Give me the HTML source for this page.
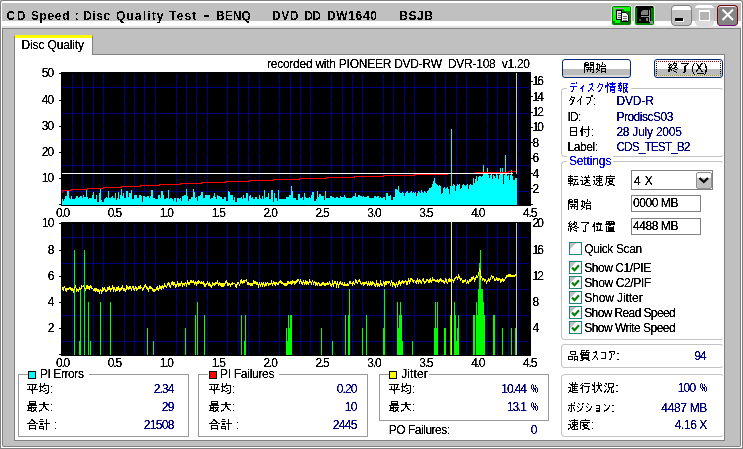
<!DOCTYPE html>
<html lang="ja"><head><meta charset="utf-8"><title>CD Speed : Disc Quality Test</title>
<style>
html,body{margin:0;padding:0}
body{width:743px;height:449px;position:relative;overflow:hidden;background:#c0c0c0;
 font-family:"Liberation Sans", "IPAGothic", sans-serif;font-size:12px;line-height:16px;color:#000}
.t{position:absolute;white-space:pre;height:16px}
.a{position:absolute}
.gb{position:absolute;border:1px solid #d0d0bf;border-radius:4px;box-sizing:border-box}
.gl{position:absolute;background:#fff;height:14px}
.sq{position:absolute;width:6px;height:6px;border:1px solid #000}
.ed{position:absolute;box-sizing:border-box;border:1px solid #808080;background:#fff}
.cb{position:absolute;box-sizing:border-box;width:13px;height:13px;border:1px solid #208080;background:linear-gradient(135deg,#c0c0c0 0%,#c0c0c0 27%,#fff 28%)}
.btn{position:absolute;box-sizing:border-box;border:1px solid #002870;border-radius:3px;background:linear-gradient(#fff 0,#fff 9px,#bcbcbc 9px,#bcbcbc 15px,#dadada 15px)}
</style></head>
<body>
<div class="a" style="left:0px;top:0px;width:743px;height:449px;background:#808080;border-radius:3px 3px 0 0"></div>
<div class="a" style="left:1px;top:1px;width:741px;height:447px;background:#fff;border-radius:2px 2px 0 0"></div>
<div class="a" style="left:2px;top:3px;width:739px;height:18px;background:#c0c0c0;"></div>
<div class="a" style="left:2px;top:26px;width:739px;height:2px;background:#e0e0e0;"></div>
<div class="a" style="left:2px;top:28px;width:739px;height:419px;background:#808080;border-radius:0 0 2px 2px"></div>
<div class="a" style="left:3px;top:29px;width:737px;height:417px;background:#c0c0c0;border-radius:0 0 1px 1px"></div>
<div class="a" style="left:14px;top:54px;width:711px;height:387px;background:#808080;"></div>
<div class="a" style="left:15px;top:55px;width:709px;height:385px;background:#fff;"></div>
<div class="a" style="left:14px;top:35px;width:79px;height:20px;background:#808080;border-radius:2px 2px 0 0"></div>
<div class="a" style="left:15px;top:35px;width:77px;height:21px;background:#fff;border-radius:1px 1px 0 0"></div>
<div class="a" style="left:15px;top:35px;width:77px;height:3px;background:#ffff00;border-radius:1px 1px 0 0"></div>

<svg class="a" style="left:611px;top:5px" width="21" height="21" viewBox="-1 -1 21 21" shape-rendering="crispEdges">
 <rect x="-1" y="-1" width="21" height="21" rx="3" fill="#e4e4e4" shape-rendering="auto"/>
 <rect x="0" y="0" width="19" height="19" rx="2" fill="#008000" shape-rendering="auto"/>
 <path d="M1 1H18V5H12V3H4V14H8V17H3V15H1Z" fill="#00ff00"/>
 <path d="M2 2H12V3H3V9H2Z" fill="#a8a0a8"/>
 <rect x="4.5" y="4.5" width="5" height="9" fill="#e0e0e0" stroke="#000" stroke-width="1"/>
 <path d="M6 7H9M6 9H9M6 11H9" stroke="#606060" stroke-width="1"/>
 <path d="M9.5 6.5H14L16.5 9V15.5H9.5Z" fill="#f4f4f4" stroke="#000" stroke-width="1" shape-rendering="auto"/>
 <path d="M11 10H15M11 12H15M11 14H15" stroke="#707070" stroke-width="1"/>
</svg>
<svg class="a" style="left:634px;top:5px" width="21" height="21" viewBox="-1 -1 21 21" shape-rendering="crispEdges">
 <rect x="-1" y="-1" width="21" height="21" rx="3" fill="#e4e4e4" shape-rendering="auto"/>
 <rect x="0" y="0" width="19" height="19" rx="2" fill="#008000" shape-rendering="auto"/>
 <rect x="1" y="0" width="17" height="2" fill="#000"/>
 <rect x="2" y="2" width="14" height="15" fill="#000"/>
 <path d="M8 4H13V9H6V6Z" fill="#808080" shape-rendering="auto"/>
 <rect x="14" y="4" width="1" height="12" fill="#a0a0a0"/>
 <rect x="6" y="10" width="8" height="1" fill="#909090"/>
 <rect x="11" y="12" width="2" height="3" fill="#808080"/>
 <rect x="4" y="13" width="2" height="2" fill="#505050"/>
 <rect x="15" y="15" width="3" height="3" fill="#909090"/>
</svg>
<div class="a" style="left:671px;top:5px;width:21px;height:21px;box-sizing:border-box;background:linear-gradient(#fff 0,#fff 4px,#c0c0c0 4px);border:1px solid #808080;border-radius:4px"></div>
<div class="a" style="left:675px;top:18px;width:8px;height:3px;background:#000;box-shadow:1px 1px #fff"></div>
<div class="a" style="left:695px;top:5px;width:19px;height:21px;box-sizing:border-box;background:linear-gradient(#fff 0,#fff 3px,#c4c4c4 3px,#c4c4c4 15px,#dcdcdc 16px);border-radius:4px"></div>
<div class="a" style="left:699px;top:10px;width:11px;height:11px;box-sizing:border-box;border:1px solid #fff;border-top-width:2px;background:#b4b4b4"></div>
<div class="a" style="left:717px;top:5px;width:21px;height:21px;box-sizing:border-box;background:#848484;border:1px solid #800000;border-bottom-color:#800080;border-radius:4px;box-shadow:inset 0 1px #f0f0f0"></div>
<svg class="a" style="left:717px;top:5px" width="21" height="21" viewBox="0 0 21 21"><path d="M5.5 4.5 L16 15 M16 4.5 L5.5 15" stroke="#fff" stroke-width="2" fill="none"/></svg>

<svg class="a" style="left:0;top:0" width="743" height="449" viewBox="0 0 743 449" shape-rendering="crispEdges">
<rect x="61" y="72" width="470" height="134" fill="#000"/>
<path d="M72.5 74V205M82.5 74V205M93.5 74V205M103.5 74V205M124.5 74V205M134.5 74V205M144.5 74V205M155.5 74V205M176.5 74V205M186.5 74V205M196.5 74V205M207.5 74V205M227.5 74V205M238.5 74V205M248.5 74V205M259.5 74V205M279.5 74V205M290.5 74V205M300.5 74V205M310.5 74V205M331.5 74V205M342.5 74V205M352.5 74V205M362.5 74V205M383.5 74V205M393.5 74V205M404.5 74V205M414.5 74V205M435.5 74V205M445.5 74V205M456.5 74V205M466.5 74V205M487.5 74V205M497.5 74V205M508.5 74V205M518.5 74V205" stroke="#000080" stroke-width="1" fill="none"/>
<path d="M61 87.5H529M61 113.5H529M61 139.5H529M61 165.5H529M61 191.5H529" stroke="#000080" stroke-width="1" fill="none"/>
<path d="M62 100.5H531M62 126.5H531M62 152.5H531M62 178.5H531" stroke="#000" stroke-width="1" fill="none"/>
<path d="M59 73.5H61M59 100.5H61M59 126.5H61M59 152.5H61M59 178.5H61M59 204.5H61" stroke="#000" stroke-width="1" fill="none"/>
<rect x="61" y="222" width="470" height="134" fill="#000"/>
<path d="M72.5 224V355M82.5 224V355M93.5 224V355M103.5 224V355M124.5 224V355M134.5 224V355M144.5 224V355M155.5 224V355M176.5 224V355M186.5 224V355M196.5 224V355M207.5 224V355M227.5 224V355M238.5 224V355M248.5 224V355M259.5 224V355M279.5 224V355M290.5 224V355M300.5 224V355M310.5 224V355M331.5 224V355M342.5 224V355M352.5 224V355M362.5 224V355M383.5 224V355M393.5 224V355M404.5 224V355M414.5 224V355M435.5 224V355M445.5 224V355M456.5 224V355M466.5 224V355M487.5 224V355M497.5 224V355M508.5 224V355M518.5 224V355" stroke="#000080" stroke-width="1" fill="none"/>
<path d="M61 237.5H529M61 263.5H529M61 289.5H529M61 315.5H529M61 341.5H529" stroke="#000080" stroke-width="1" fill="none"/>
<path d="M62 250.5H531M62 276.5H531M62 302.5H531M62 328.5H531" stroke="#000" stroke-width="1" fill="none"/>
<path d="M59 223.5H61M59 250.5H61M59 276.5H61M59 302.5H61M59 328.5H61M59 354.5H61" stroke="#000" stroke-width="1" fill="none"/>
<path d="M531 204.5H533M531 188.5H533M531 173.5H533M531 158.5H533M531 142.5H533M531 127.5H533M531 112.5H533M531 96.5H533M531 81.5H533" stroke="#000" stroke-width="1" fill="none"/>
<path d="M529 196.5H531M529 181.5H531M529 166.5H531M529 150.5H531M529 135.5H531M529 120.5H531M529 104.5H531M529 89.5H531M529 73.5H531" stroke="#000080" stroke-width="1" fill="none"/>
<path d="M62 205V199H63V201H64V199H65V196H66V196H67V191H68V191H69V198H70V199H71V196H72V199H73V199H74V199H75V198H76V196H77V196H78V198H79V197H80V196H81V196H82V198H83V195H84V197H85V197H86V190H87V197H88V199H89V198H90V198H91V198H92V195H93V192H94V199H95V199H96V195H97V202H98V202H99V193H100V189H101V200H102V202H103V202H104V199H105V198H106V197H107V198H108V191H109V198H110V198H111V197H112V196H113V198H114V198H115V193H116V200H117V198H118V192H119V199H120V195H121V189H122V196H123V193H124V198H125V198H126V191H127V191H128V197H129V193H130V193H131V190H132V199H133V199H134V195H135V195H136V195H137V198H138V198H139V195H140V195H141V196H142V202H143V196H144V196H145V197H146V197H147V196H148V196H149V198H150V196H151V190H152V190H153V198H154V198H155V199H156V199H157V199H158V195H159V195H160V198H161V191H162V191H163V195H164V199H165V199H166V198H167V198H168V190H169V199H170V198H171V198H172V199H173V201H174V198H175V198H176V202H177V198H178V198H179V199H180V198H181V201H182V196H183V196H184V195H185V195H186V189H187V196H188V201H189V199H190V199H191V197H192V197H193V189H194V192H195V198H196V197H197V201H198V196H199V196H200V195H201V192H202V192H203V198H204V198H205V195H206V195H207V195H208V195H209V195H210V199H211V198H212V198H213V196H214V193H215V197H216V199H217V195H218V196H219V196H220V197H221V197H222V199H223V199H224V197H225V197H226V201H227V201H228V191H229V192H230V195H231V195H232V195H233V200H234V197H235V202H236V202H237V198H238V198H239V198H240V198H241V197H242V199H243V195H244V198H245V198H246V193H247V193H248V201H249V196H250V195H251V198H252V197H253V199H254V199H255V197H256V197H257V199H258V199H259V195H260V198H261V199H262V196H263V199H264V190H265V198H266V197H267V197H268V193H269V199H270V199H271V190H272V190H273V202H274V193H275V198H276V198H277V201H278V190H279V199H280V199H281V199H282V199H283V199H284V199H285V199H286V197H287V197H288V197H289V195H290V195H291V186H292V191H293V198H294V198H295V198H296V200H297V200H298V194H299V194H300V198H301V198H302V197H303V200H304V193H305V197H306V198H307V198H308V198H309V197H310V198H311V195H312V192H313V192H314V201H315V201H316V199H317V191H318V197H319V194H320V194H321V196H322V196H323V196H324V200H325V191H326V198H327V198H328V198H329V198H330V196H331V196H332V197H333V197H334V198H335V198H336V197H337V197H338V198H339V198H340V196H341V197H342V197H343V197H344V195H345V197H346V198H347V198H348V198H349V198H350V198H351V198H352V197H353V196H354V196H355V193H356V197H357V197H358V195H359V195H360V196H361V196H362V197H363V196H364V197H365V197H366V197H367V196H368V196H369V198H370V198H371V198H372V198H373V198H374V196H375V196H376V197H377V196H378V196H379V198H380V197H381V198H382V198H383V197H384V197H385V200H386V193H387V193H388V196H389V196H390V195H391V200H392V200H393V197H394V197H395V189H396V189H397V190H398V186H399V192H400V193H401V193H402V192H403V193H404V196H405V193H406V192H407V191H408V193H409V193H410V192H411V191H412V193H413V192H414V193H415V192H416V196H417V193H418V191H419V192H420V193H421V190H422V192H423V193H424V191H425V192H426V193H427V191H428V190H429V188H430V188H431V187H432V184H433V181H434V178H435V183H436V184H437V185H438V186H439V185H440V186H441V194H442V193H443V188H444V187H445V189H446V188H447V187H448V189H449V194H450V186H451V129H452V186H453V184H454V185H455V191H456V186H457V184H458V185H459V184H460V189H461V188H462V185H463V184H464V185H465V186H466V185H467V184H468V189H469V185H470V184H471V185H472V185H473V178H474V183H475V179H476V176H477V181H478V177H479V176H480V176H481V177H482V176H483V165H484V172H485V173H486V174H487V168H488V175H489V178H490V175H491V174H492V179H493V175H494V176H495V178H496V174H497V175H498V179H499V175H500V168H501V174H502V168H503V184H504V175H505V155H506V174H507V176H508V175H509V180H510V175H511V170H512V176H513V180H514V180H515V178H516V178H517V205Z" fill="#00ffff"/>
<path d="M62.5 190V193M62 190.5H72M71 189.5H88M87 188.5H104M103 187.5H122M121 186.5H141M140 185.5H160M159 184.5H181M180 183.5H202M201 182.5H226M225 181.5H250M249 180.5H274M273 179.5H300M299 178.5H327M326 177.5H355M354 176.5H384M383 175.5H415M414 174.5H448M447 173.5H476M475 172.5H509M508 171.5H516" stroke="#ff0000" stroke-width="1" fill="none"/>
<rect x="62" y="173" width="451" height="1" fill="#ffffff"/>
<path d="M74 250h1V355h-1ZM79 341h2V355h-2ZM80 289h1V355h-1ZM84 250h1V355h-1ZM88 302h1V355h-1ZM90 341h1V355h-1ZM100 302h1V355h-1ZM110 302h1V355h-1ZM147 328h1V355h-1ZM153 341h1V355h-1ZM185 328h1V355h-1ZM195 315h1V355h-1ZM197 302h1V355h-1ZM204 315h1V355h-1ZM241 315h1V355h-1ZM244 341h1V355h-1ZM245 315h1V355h-1ZM286 328h1V355h-1ZM287 341h1V355h-1ZM288 315h1V355h-1ZM289 328h1V355h-1ZM290 315h2V355h-2ZM321 328h1V355h-1ZM332 341h1V355h-1ZM345 315h1V355h-1ZM348 315h1V355h-1ZM349 289h1V355h-1ZM362 328h1V355h-1ZM366 315h1V355h-1ZM383 328h1V355h-1ZM384 289h1V355h-1ZM397 302h1V355h-1ZM398 328h1V355h-1ZM399 315h1V355h-1ZM400 302h1V355h-1ZM401 315h1V355h-1ZM402 341h1V355h-1ZM412 341h1V355h-1ZM434 328h1V355h-1ZM435 302h1V355h-1ZM436 328h1V355h-1ZM437 302h1V355h-1ZM444 328h2V355h-2ZM450 315h1V355h-1ZM454 302h1V355h-1ZM455 315h1V355h-1ZM456 341h1V355h-1ZM457 328h1V355h-1ZM458 315h1V355h-1ZM473 315h2V355h-2ZM476 302h1V355h-1ZM477 315h1V355h-1ZM478 289h1V355h-1ZM479 263h1V355h-1ZM480 250h1V355h-1ZM481 289h2V355h-2ZM483 302h1V355h-1ZM484 315h1V355h-1ZM493 315h2V355h-2ZM502 328h1V355h-1ZM511 328h1V355h-1ZM515 328h1V355h-1Z" fill="#00ff00"/>
<path d="M62 287h1V290h-1ZM63 287h1V291h-1ZM64 286h1V288h-1ZM65 288h1V291h-1ZM66 288h1V292h-1ZM67 288h1V290h-1ZM68 288h1V290h-1ZM69 287h1V289h-1ZM70 287h1V290h-1ZM71 288h1V291h-1ZM72 288h1V291h-1ZM73 289h1V293h-1ZM74 287h1V290h-1ZM75 285h1V288h-1ZM76 288h1V292h-1ZM77 289h1V291h-1ZM78 289h1V292h-1ZM79 287h1V290h-1ZM80 288h1V290h-1ZM81 285h1V289h-1ZM82 286h1V287h-1ZM83 285h1V287h-1ZM84 287h1V289h-1ZM85 288h1V291h-1ZM86 285h1V289h-1ZM87 285h1V289h-1ZM88 286h1V289h-1ZM89 286h1V290h-1ZM90 285h1V288h-1ZM91 286h1V289h-1ZM92 288h1V289h-1ZM93 289h1V291h-1ZM94 288h1V291h-1ZM95 288h1V292h-1ZM96 288h1V291h-1ZM97 289h1V292h-1ZM98 289h1V292h-1ZM99 290h1V294h-1ZM100 289h1V291h-1ZM101 290h1V294h-1ZM102 287h1V292h-1ZM103 288h1V291h-1ZM104 287h1V290h-1ZM105 289h1V292h-1ZM106 290h1V292h-1ZM107 287h1V291h-1ZM108 287h1V290h-1ZM109 286h1V290h-1ZM110 288h1V292h-1ZM111 288h1V290h-1ZM112 285h1V289h-1ZM113 287h1V292h-1ZM114 287h1V290h-1ZM115 289h1V292h-1ZM116 287h1V291h-1ZM117 287h1V291h-1ZM118 286h1V290h-1ZM119 288h1V292h-1ZM120 288h1V291h-1ZM121 287h1V290h-1ZM122 285h1V289h-1ZM123 288h1V291h-1ZM124 288h1V291h-1ZM125 289h1V292h-1ZM126 285h1V290h-1ZM127 286h1V289h-1ZM128 287h1V290h-1ZM129 286h1V289h-1ZM130 286h1V289h-1ZM131 288h1V291h-1ZM132 286h1V288h-1ZM133 286h1V290h-1ZM134 288h1V291h-1ZM135 286h1V289h-1ZM136 287h1V291h-1ZM137 288h1V290h-1ZM138 286h1V289h-1ZM139 286h1V289h-1ZM140 285h1V289h-1ZM141 287h1V288h-1ZM142 288h1V291h-1ZM143 287h1V290h-1ZM144 285h1V288h-1ZM145 284h1V287h-1ZM146 286h1V289h-1ZM147 287h1V290h-1ZM148 288h1V292h-1ZM149 286h1V289h-1ZM150 286h1V289h-1ZM151 287h1V289h-1ZM152 288h1V291h-1ZM153 289h1V292h-1ZM154 289h1V292h-1ZM155 289h1V291h-1ZM156 287h1V290h-1ZM157 286h1V290h-1ZM158 288h1V291h-1ZM159 285h1V289h-1ZM160 286h1V289h-1ZM161 286h1V290h-1ZM162 285h1V288h-1ZM163 286h1V289h-1ZM164 283h1V287h-1ZM165 285h1V287h-1ZM166 286h1V288h-1ZM167 283h1V286h-1ZM168 282h1V285h-1ZM169 283h1V287h-1ZM170 285h1V288h-1ZM171 282h1V285h-1ZM172 281h1V285h-1ZM173 282h1V286h-1ZM174 282h1V285h-1ZM175 284h1V288h-1ZM176 284h1V287h-1ZM177 281h1V285h-1ZM178 283h1V287h-1ZM179 283h1V286h-1ZM180 283h1V286h-1ZM181 281h1V284h-1ZM182 283h1V287h-1ZM183 283h1V285h-1ZM184 283h1V286h-1ZM185 282h1V284h-1ZM186 283h1V287h-1ZM187 280h1V284h-1ZM188 282h1V285h-1ZM189 282h1V285h-1ZM190 280h1V283h-1ZM191 280h1V283h-1ZM192 281h1V283h-1ZM193 280h1V283h-1ZM194 282h1V285h-1ZM195 281h1V284h-1ZM196 282h1V286h-1ZM197 281h1V284h-1ZM198 280h1V284h-1ZM199 281h1V283h-1ZM200 282h1V284h-1ZM201 281h1V284h-1ZM202 282h1V284h-1ZM203 281h1V285h-1ZM204 283h1V287h-1ZM205 284h1V287h-1ZM206 283h1V285h-1ZM207 281h1V284h-1ZM208 283h1V286h-1ZM209 282h1V286h-1ZM210 284h1V287h-1ZM211 285h1V288h-1ZM212 282h1V286h-1ZM213 283h1V285h-1ZM214 283h1V286h-1ZM215 282h1V285h-1ZM216 282h1V284h-1ZM217 280h1V284h-1ZM218 283h1V286h-1ZM219 282h1V285h-1ZM220 283h1V286h-1ZM221 283h1V287h-1ZM222 283h1V287h-1ZM223 283h1V287h-1ZM224 283h1V286h-1ZM225 281h1V284h-1ZM226 280h1V283h-1ZM227 282h1V286h-1ZM228 283h1V286h-1ZM229 283h1V285h-1ZM230 284h1V287h-1ZM231 283h1V285h-1ZM232 282h1V285h-1ZM233 283h1V284h-1ZM234 283h1V284h-1ZM235 284h1V287h-1ZM236 284h1V288h-1ZM237 282h1V285h-1ZM238 282h1V284h-1ZM239 284h1V286h-1ZM240 280h1V284h-1ZM241 279h1V283h-1ZM242 281h1V284h-1ZM243 280h1V283h-1ZM244 280h1V283h-1ZM245 280h1V281h-1ZM246 279h1V282h-1ZM247 282h1V285h-1ZM248 282h1V285h-1ZM249 283h1V285h-1ZM250 283h1V286h-1ZM251 283h1V286h-1ZM252 283h1V286h-1ZM253 280h1V284h-1ZM254 281h1V284h-1ZM255 281h1V284h-1ZM256 282h1V285h-1ZM257 282h1V285h-1ZM258 284h1V288h-1ZM259 282h1V285h-1ZM260 284h1V287h-1ZM261 282h1V285h-1ZM262 283h1V287h-1ZM263 282h1V285h-1ZM264 284h1V287h-1ZM265 282h1V286h-1ZM266 283h1V286h-1ZM267 282h1V284h-1ZM268 283h1V286h-1ZM269 283h1V285h-1ZM270 283h1V285h-1ZM271 280h1V284h-1ZM272 283h1V286h-1ZM273 281h1V284h-1ZM274 282h1V285h-1ZM275 282h1V286h-1ZM276 282h1V284h-1ZM277 283h1V285h-1ZM278 282h1V285h-1ZM279 281h1V283h-1ZM280 280h1V283h-1ZM281 281h1V284h-1ZM282 282h1V284h-1ZM283 283h1V285h-1ZM284 283h1V286h-1ZM285 283h1V286h-1ZM286 283h1V286h-1ZM287 281h1V285h-1ZM288 281h1V284h-1ZM289 282h1V284h-1ZM290 281h1V284h-1ZM291 281h1V285h-1ZM292 280h1V284h-1ZM293 281h1V283h-1ZM294 281h1V285h-1ZM295 281h1V284h-1ZM296 280h1V283h-1ZM297 279h1V282h-1ZM298 279h1V281h-1ZM299 281h1V284h-1ZM300 279h1V282h-1ZM301 281h1V284h-1ZM302 282h1V285h-1ZM303 280h1V283h-1ZM304 282h1V285h-1ZM305 280h1V284h-1ZM306 281h1V285h-1ZM307 281h1V284h-1ZM308 282h1V285h-1ZM309 279h1V283h-1ZM310 281h1V283h-1ZM311 282h1V285h-1ZM312 280h1V282h-1ZM313 282h1V285h-1ZM314 281h1V283h-1ZM315 282h1V286h-1ZM316 282h1V285h-1ZM317 283h1V286h-1ZM318 282h1V284h-1ZM319 283h1V286h-1ZM320 284h1V286h-1ZM321 283h1V286h-1ZM322 282h1V285h-1ZM323 282h1V285h-1ZM324 283h1V286h-1ZM325 283h1V286h-1ZM326 283h1V285h-1ZM327 282h1V285h-1ZM328 283h1V285h-1ZM329 281h1V284h-1ZM330 283h1V286h-1ZM331 284h1V287h-1ZM332 280h1V285h-1ZM333 283h1V287h-1ZM334 281h1V284h-1ZM335 281h1V284h-1ZM336 283h1V288h-1ZM337 281h1V285h-1ZM338 284h1V288h-1ZM339 282h1V285h-1ZM340 281h1V284h-1ZM341 283h1V285h-1ZM342 282h1V285h-1ZM343 284h1V286h-1ZM344 282h1V286h-1ZM345 284h1V286h-1ZM346 284h1V286h-1ZM347 283h1V286h-1ZM348 284h1V286h-1ZM349 281h1V284h-1ZM350 281h1V284h-1ZM351 283h1V284h-1ZM352 282h1V286h-1ZM353 281h1V284h-1ZM354 283h1V285h-1ZM355 279h1V283h-1ZM356 280h1V283h-1ZM357 282h1V284h-1ZM358 280h1V282h-1ZM359 279h1V282h-1ZM360 281h1V284h-1ZM361 283h1V285h-1ZM362 282h1V284h-1ZM363 282h1V286h-1ZM364 282h1V285h-1ZM365 282h1V284h-1ZM366 281h1V284h-1ZM367 283h1V286h-1ZM368 281h1V285h-1ZM369 283h1V286h-1ZM370 281h1V285h-1ZM371 282h1V286h-1ZM372 281h1V285h-1ZM373 282h1V284h-1ZM374 283h1V286h-1ZM375 284h1V287h-1ZM376 280h1V285h-1ZM377 283h1V287h-1ZM378 283h1V286h-1ZM379 284h1V287h-1ZM380 280h1V285h-1ZM381 283h1V286h-1ZM382 284h1V286h-1ZM383 281h1V284h-1ZM384 282h1V287h-1ZM385 281h1V285h-1ZM386 281h1V285h-1ZM387 281h1V283h-1ZM388 281h1V284h-1ZM389 281h1V283h-1ZM390 283h1V286h-1ZM391 280h1V283h-1ZM392 282h1V287h-1ZM393 282h1V285h-1ZM394 283h1V286h-1ZM395 284h1V288h-1ZM396 282h1V285h-1ZM397 284h1V287h-1ZM398 281h1V285h-1ZM399 280h1V284h-1ZM400 282h1V286h-1ZM401 281h1V284h-1ZM402 280h1V283h-1ZM403 281h1V284h-1ZM404 281h1V283h-1ZM405 280h1V282h-1ZM406 281h1V285h-1ZM407 281h1V285h-1ZM408 278h1V282h-1ZM409 280h1V284h-1ZM410 278h1V282h-1ZM411 278h1V280h-1ZM412 279h1V282h-1ZM413 280h1V283h-1ZM414 280h1V281h-1ZM415 281h1V283h-1ZM416 280h1V284h-1ZM417 278h1V282h-1ZM418 280h1V284h-1ZM419 279h1V282h-1ZM420 280h1V283h-1ZM421 281h1V284h-1ZM422 279h1V281h-1ZM423 278h1V282h-1ZM424 281h1V284h-1ZM425 281h1V283h-1ZM426 279h1V282h-1ZM427 279h1V281h-1ZM428 280h1V283h-1ZM429 279h1V283h-1ZM430 278h1V282h-1ZM431 280h1V283h-1ZM432 277h1V281h-1ZM433 279h1V281h-1ZM434 279h1V281h-1ZM435 280h1V282h-1ZM436 280h1V282h-1ZM437 279h1V282h-1ZM438 280h1V283h-1ZM439 279h1V282h-1ZM440 278h1V281h-1ZM441 279h1V282h-1ZM442 280h1V282h-1ZM443 280h1V283h-1ZM444 281h1V284h-1ZM445 278h1V282h-1ZM446 279h1V283h-1ZM447 282h1V284h-1ZM448 279h1V282h-1ZM449 278h1V282h-1ZM450 279h1V282h-1ZM451 279h1V281h-1ZM452 279h1V281h-1ZM453 280h1V283h-1ZM454 278h1V281h-1ZM455 277h1V279h-1ZM456 276h1V278h-1ZM457 277h1V280h-1ZM458 274h1V278h-1ZM459 276h1V279h-1ZM460 278h1V281h-1ZM461 278h1V280h-1ZM462 280h1V283h-1ZM463 280h1V283h-1ZM464 280h1V282h-1ZM465 279h1V282h-1ZM466 282h1V284h-1ZM467 280h1V283h-1ZM468 281h1V284h-1ZM469 279h1V282h-1ZM470 279h1V282h-1ZM471 277h1V281h-1ZM472 277h1V280h-1ZM473 276h1V279h-1ZM474 278h1V282h-1ZM475 277h1V280h-1ZM476 275h1V278h-1ZM477 276h1V278h-1ZM478 272h1V276h-1ZM479 268h1V272h-1ZM480 270h1V280h-1ZM481 276h1V278h-1ZM482 278h1V281h-1ZM483 278h1V280h-1ZM484 279h1V282h-1ZM485 279h1V281h-1ZM486 281h1V284h-1ZM487 280h1V282h-1ZM488 278h1V281h-1ZM489 279h1V282h-1ZM490 277h1V280h-1ZM491 275h1V277h-1ZM492 276h1V279h-1ZM493 276h1V278h-1ZM494 278h1V281h-1ZM495 279h1V281h-1ZM496 277h1V280h-1ZM497 278h1V281h-1ZM498 278h1V281h-1ZM499 278h1V280h-1ZM500 279h1V283h-1ZM501 279h1V282h-1ZM502 278h1V281h-1ZM503 279h1V282h-1ZM504 279h1V281h-1ZM505 277h1V279h-1ZM506 275h1V278h-1ZM507 275h1V277h-1ZM508 274h1V277h-1ZM509 274h1V277h-1ZM510 274h1V277h-1ZM511 275h1V277h-1ZM512 275h1V277h-1ZM513 275h1V277h-1ZM514 275h1V277h-1ZM515 274h1V276h-1ZM516 275h1V278h-1Z" fill="#ffff00"/>
<rect x="451" y="222" width="1" height="133" fill="#ffff00"/>
<rect x="516" y="73" width="1" height="101" fill="#c8c8c8"/>
<rect x="516" y="223" width="1" height="132" fill="#c8c8c8"/>
</svg>
<div class="gb" style="left:18px;top:374px;width:171px;height:63px;border-color:#9a9a9a;border-radius:0px"></div>
<div class="gl" style="left:28px;top:367px;width:61px"></div>
<div class="gb" style="left:198px;top:374px;width:170px;height:63px;border-color:#9a9a9a;border-radius:0px"></div>
<div class="gl" style="left:208px;top:367px;width:71px"></div>
<div class="gb" style="left:379px;top:374px;width:170px;height:47px;border-color:#9a9a9a;border-radius:0px"></div>
<div class="gl" style="left:389px;top:367px;width:40px"></div>
<div class="sq" style="left:28px;top:371px;background:#00ffff"></div>
<div class="sq" style="left:208.5px;top:371px;background:#ff0000"></div>
<div class="sq" style="left:389px;top:371px;background:#ffff00"></div>
<div class="gb" style="left:561px;top:88px;width:163px;height:69px;border-color:#c4c4c4 transparent #c4c4c4 #c4c4c4;border-radius:4px"></div>
<div class="gl" style="left:567px;top:81px;width:64px"></div>
<div class="gb" style="left:561px;top:161px;width:163px;height:179px;border-color:#c4c4c4 transparent #c4c4c4 #c4c4c4;border-radius:4px"></div>
<div class="gl" style="left:567px;top:154px;width:46px"></div>
<div class="gb" style="left:561px;top:344px;width:163px;height:24px;border-color:#c4c4c4 transparent #c4c4c4 #c4c4c4;border-radius:4px"></div>
<div class="gb" style="left:561px;top:374px;width:163px;height:63px;border-color:#c4c4c4 transparent #c4c4c4 #c4c4c4;border-radius:4px"></div>
<div class="btn" style="left:562px;top:59px;width:69px;height:19px"></div>
<div class="btn" style="left:654px;top:59px;width:69px;height:19px"></div>
<div class="a" style="left:656px;top:61px;width:63px;height:13px;border:1px dotted;border-color:#a00000 #000 #a0a000 #000"></div>
<div class="a" style="left:697px;top:73px;width:7px;height:1px;background:#000;"></div>
<div class="ed" style="left:631px;top:170px;width:82px;height:20px"></div>
<div class="a" style="left:696px;top:172px;width:16px;height:17px;background:linear-gradient(#fff 0,#fff 5px,#c0c0c0 5px);box-sizing:border-box;border:1px solid #909090;border-radius:2px"></div>
<svg class="a" style="left:698px;top:176px" width="12" height="8" viewBox="0 0 12 8"><path d="M1.5 2 L5.8 6 L10 2" fill="none" stroke="#000" stroke-width="2.2"/></svg>
<div class="ed" style="left:631px;top:195px;width:70px;height:17px"></div>
<div class="ed" style="left:631px;top:218px;width:70px;height:17px"></div>
<div class="cb" style="left:569px;top:242px"></div>
<div class="cb" style="left:569px;top:261px"></div>
<svg class="a" style="left:571px;top:264px" width="9" height="9" viewBox="0 0 9 9"><path d="M1 3.5 L3.5 6.2 L8 1.2" fill="none" stroke="#008000" stroke-width="2.2"/></svg>
<div class="cb" style="left:569px;top:276px"></div>
<svg class="a" style="left:571px;top:279px" width="9" height="9" viewBox="0 0 9 9"><path d="M1 3.5 L3.5 6.2 L8 1.2" fill="none" stroke="#008000" stroke-width="2.2"/></svg>
<div class="cb" style="left:569px;top:291px"></div>
<svg class="a" style="left:571px;top:294px" width="9" height="9" viewBox="0 0 9 9"><path d="M1 3.5 L3.5 6.2 L8 1.2" fill="none" stroke="#008000" stroke-width="2.2"/></svg>
<div class="cb" style="left:569px;top:306px"></div>
<svg class="a" style="left:571px;top:309px" width="9" height="9" viewBox="0 0 9 9"><path d="M1 3.5 L3.5 6.2 L8 1.2" fill="none" stroke="#008000" stroke-width="2.2"/></svg>
<div class="cb" style="left:569px;top:321px"></div>
<svg class="a" style="left:571px;top:324px" width="9" height="9" viewBox="0 0 9 9"><path d="M1 3.5 L3.5 6.2 L8 1.2" fill="none" stroke="#008000" stroke-width="2.2"/></svg>
<svg width="0" height="0" style="position:absolute"><filter id="thr" x="0" y="0" width="100%" height="100%" color-interpolation-filters="sRGB"><feComponentTransfer><feFuncA type="discrete" tableValues="0 0 1 1 1"/></feComponentTransfer></filter></svg>
<div id="txt" style="position:absolute;left:0;top:0;width:743px;height:449px;filter:url(#thr)">
<div class="t" id="t58" style="top:381px;left:26.20px;letter-spacing:-0.172px;"><span>平均:</span></div>
<div class="t" id="t59" style="top:399px;left:26.20px;letter-spacing:-0.172px;"><span>最大:</span></div>
<div class="t" id="t60" style="top:417px;left:26.20px;letter-spacing:0.109px;"><span>合計 :</span></div>
<div class="t" id="t65" style="top:381px;left:208.20px;letter-spacing:-0.172px;"><span>平均:</span></div>
<div class="t" id="t66" style="top:399px;left:208.20px;letter-spacing:-0.172px;"><span>最大:</span></div>
<div class="t" id="t67" style="top:417px;left:208.20px;letter-spacing:0.109px;"><span>合計 :</span></div>
<div class="t" id="t72" style="top:381px;left:388.20px;letter-spacing:-0.172px;"><span>平均:</span></div>
<div class="t" id="t73" style="top:399px;left:388.20px;letter-spacing:-0.172px;"><span>最大:</span></div>
<div class="t" id="t76" style="top:381px;left:531.00px;color:#000080;"><span><span style="display:inline-block;transform:scaleX(0.660);transform-origin:0 50%;margin-right:-3.63px">%</span></span></div>
<div class="t" id="t77" style="top:399px;left:531.00px;color:#000080;"><span><span style="display:inline-block;transform:scaleX(0.660);transform-origin:0 50%;margin-right:-3.63px">%</span></span></div>
<div class="t" id="t80" style="top:60px;left:595.30px;width:200px;margin-left:-100px;text-align:center;letter-spacing:0.000px;"><span>開始</span></div>
<div class="t" id="t81" style="top:60px;left:687.26px;width:200px;margin-left:-100px;text-align:center;letter-spacing:0.125px;"><span>終了(X)</span></div>
<div class="t" id="t82" style="top:80px;left:569.30px;color:#0000f0;"><span><span style="display:inline-block;transform:scaleX(0.740);transform-origin:0 50%;margin-right:-12.48px">ディスク</span>情報</span></div>
<div class="t" id="t83" style="top:93px;left:567.80px;"><span><span style="display:inline-block;transform:scaleX(0.690);transform-origin:0 50%;margin-right:-11.16px">タイプ</span>:</span></div>
<div class="t" id="t85" style="top:124px;left:567.40px;letter-spacing:-0.172px;"><span>日付:</span></div>
<div class="t" id="t92" style="top:173px;left:567.20px;letter-spacing:0.333px;"><span>転送速度</span></div>
<div class="t" id="t93" style="top:197px;left:567.20px;letter-spacing:1.000px;"><span>開始</span></div>
<div class="t" id="t94" style="top:219px;left:567.20px;letter-spacing:0.333px;"><span>終了位置</span></div>
<div class="t" id="t104" style="top:348px;left:567.20px;"><span>品質<span style="display:inline-block;transform:scaleX(0.700);transform-origin:0 50%;margin-right:-10.80px">スコア</span>:</span></div>
<div class="t" id="t106" style="top:380px;left:567.20px;letter-spacing:0.039px;"><span>進行状況:</span></div>
<div class="t" id="t107" style="top:400px;left:567.20px;"><span><span style="display:inline-block;transform:scaleX(0.735);transform-origin:0 50%;margin-right:-15.90px">ポジション</span>:</span></div>
<div class="t" id="t108" style="top:417px;left:567.20px;letter-spacing:-0.172px;"><span>速度:</span></div>
<div class="t" id="t110" style="top:380px;left:700.40px;color:#000080;"><span><span style="display:inline-block;transform:scaleX(0.660);transform-origin:0 50%;margin-right:-3.63px">%</span></span></div>
</div>
<svg width="0" height="0" style="position:absolute"><filter id="thr3" x="0" y="0" width="100%" height="100%" color-interpolation-filters="sRGB"><feComponentTransfer><feFuncA type="linear" slope="3" intercept="-0.55"/></feComponentTransfer></filter></svg>
<div id="txl" style="position:absolute;left:0;top:0;width:743px;height:449px;filter:url(#thr3)">
<div class="t" id="t12" style="top:37px;left:21.50px;letter-spacing:-0.138px;"><span>Disc Quality</span></div>
<div class="t" id="t13" style="top:56px;right:213.00px;letter-spacing:-0.253px;margin-right:0.253px;"><span>recorded with PIONEER DVD-RW &nbsp;DVR-108 &nbsp;v1.20</span></div>
<div class="t" id="t14" style="top:65px;right:688.80px;letter-spacing:-0.859px;margin-right:0.859px;"><span>50</span></div>
<div class="t" id="t15" style="top:92px;right:688.80px;letter-spacing:-0.859px;margin-right:0.859px;"><span>40</span></div>
<div class="t" id="t16" style="top:118px;right:688.80px;letter-spacing:-0.859px;margin-right:0.859px;"><span>30</span></div>
<div class="t" id="t17" style="top:144px;right:688.80px;letter-spacing:-0.859px;margin-right:0.859px;"><span>20</span></div>
<div class="t" id="t18" style="top:170px;right:688.80px;letter-spacing:-0.859px;margin-right:0.859px;"><span>10</span></div>
<div class="t" id="t19" style="top:73px;left:532.50px;letter-spacing:-1.859px;"><span>16</span></div>
<div class="t" id="t20" style="top:89px;left:532.50px;letter-spacing:-1.859px;"><span>14</span></div>
<div class="t" id="t21" style="top:104px;left:532.50px;letter-spacing:-1.859px;"><span>12</span></div>
<div class="t" id="t22" style="top:119px;left:532.50px;letter-spacing:-1.859px;"><span>10</span></div>
<div class="t" id="t23" style="top:135px;left:532.50px;letter-spacing:-0.688px;"><span>8</span></div>
<div class="t" id="t24" style="top:150px;left:532.50px;letter-spacing:-0.688px;"><span>6</span></div>
<div class="t" id="t25" style="top:166px;left:532.50px;letter-spacing:-0.688px;"><span>4</span></div>
<div class="t" id="t26" style="top:181px;left:532.50px;letter-spacing:-0.688px;"><span>2</span></div>
<div class="t" id="t27" style="top:205px;left:62.50px;width:200px;margin-left:-100px;text-align:center;letter-spacing:-1.194px;"><span>0.0</span></div>
<div class="t" id="t28" style="top:205px;left:114.40px;width:200px;margin-left:-100px;text-align:center;letter-spacing:-1.194px;"><span>0.5</span></div>
<div class="t" id="t29" style="top:205px;left:166.30px;width:200px;margin-left:-100px;text-align:center;letter-spacing:-1.194px;"><span>1.0</span></div>
<div class="t" id="t30" style="top:205px;left:218.20px;width:200px;margin-left:-100px;text-align:center;letter-spacing:-1.194px;"><span>1.5</span></div>
<div class="t" id="t31" style="top:205px;left:270.10px;width:200px;margin-left:-100px;text-align:center;letter-spacing:-1.194px;"><span>2.0</span></div>
<div class="t" id="t32" style="top:205px;left:322.00px;width:200px;margin-left:-100px;text-align:center;letter-spacing:-1.194px;"><span>2.5</span></div>
<div class="t" id="t33" style="top:205px;left:373.90px;width:200px;margin-left:-100px;text-align:center;letter-spacing:-1.194px;"><span>3.0</span></div>
<div class="t" id="t34" style="top:205px;left:425.80px;width:200px;margin-left:-100px;text-align:center;letter-spacing:-1.194px;"><span>3.5</span></div>
<div class="t" id="t35" style="top:205px;left:477.70px;width:200px;margin-left:-100px;text-align:center;letter-spacing:-1.194px;"><span>4.0</span></div>
<div class="t" id="t36" style="top:205px;left:529.60px;width:200px;margin-left:-100px;text-align:center;letter-spacing:-1.194px;"><span>4.5</span></div>
<div class="t" id="t37" style="top:215px;right:688.50px;letter-spacing:-0.859px;margin-right:0.859px;"><span>10</span></div>
<div class="t" id="t38" style="top:242px;right:688.50px;letter-spacing:-0.688px;margin-right:0.688px;"><span>8</span></div>
<div class="t" id="t39" style="top:268px;right:688.50px;letter-spacing:-0.688px;margin-right:0.688px;"><span>6</span></div>
<div class="t" id="t40" style="top:294px;right:688.50px;letter-spacing:-0.688px;margin-right:0.688px;"><span>4</span></div>
<div class="t" id="t41" style="top:320px;right:688.50px;letter-spacing:-0.688px;margin-right:0.688px;"><span>2</span></div>
<div class="t" id="t42" style="top:215px;left:532.50px;letter-spacing:-1.859px;"><span>20</span></div>
<div class="t" id="t43" style="top:242px;left:532.50px;letter-spacing:-1.859px;"><span>16</span></div>
<div class="t" id="t44" style="top:268px;left:532.50px;letter-spacing:-1.859px;"><span>12</span></div>
<div class="t" id="t45" style="top:294px;left:532.50px;letter-spacing:-0.688px;"><span>8</span></div>
<div class="t" id="t46" style="top:320px;left:532.50px;letter-spacing:-0.688px;"><span>4</span></div>
<div class="t" id="t47" style="top:355px;left:62.50px;width:200px;margin-left:-100px;text-align:center;letter-spacing:-1.194px;"><span>0.0</span></div>
<div class="t" id="t48" style="top:355px;left:114.40px;width:200px;margin-left:-100px;text-align:center;letter-spacing:-1.194px;"><span>0.5</span></div>
<div class="t" id="t49" style="top:355px;left:166.30px;width:200px;margin-left:-100px;text-align:center;letter-spacing:-1.194px;"><span>1.0</span></div>
<div class="t" id="t50" style="top:355px;left:218.20px;width:200px;margin-left:-100px;text-align:center;letter-spacing:-1.194px;"><span>1.5</span></div>
<div class="t" id="t51" style="top:355px;left:270.10px;width:200px;margin-left:-100px;text-align:center;letter-spacing:-1.194px;"><span>2.0</span></div>
<div class="t" id="t52" style="top:355px;left:322.00px;width:200px;margin-left:-100px;text-align:center;letter-spacing:-1.194px;"><span>2.5</span></div>
<div class="t" id="t53" style="top:355px;left:373.90px;width:200px;margin-left:-100px;text-align:center;letter-spacing:-1.194px;"><span>3.0</span></div>
<div class="t" id="t54" style="top:355px;left:425.80px;width:200px;margin-left:-100px;text-align:center;letter-spacing:-1.194px;"><span>3.5</span></div>
<div class="t" id="t55" style="top:355px;left:477.70px;width:200px;margin-left:-100px;text-align:center;letter-spacing:-1.194px;"><span>4.0</span></div>
<div class="t" id="t56" style="top:355px;left:529.60px;width:200px;margin-left:-100px;text-align:center;letter-spacing:-1.194px;"><span>4.5</span></div>
<div class="t" id="t57" style="top:366px;left:39.90px;letter-spacing:-0.418px;"><span>PI Errors</span></div>
<div class="t" id="t61" style="top:381px;right:568.70px;color:#000080;letter-spacing:-0.953px;margin-right:0.953px;"><span>2.34</span></div>
<div class="t" id="t62" style="top:399px;right:568.70px;color:#000080;letter-spacing:-0.859px;margin-right:0.859px;"><span>29</span></div>
<div class="t" id="t63" style="top:417px;right:568.70px;color:#000080;letter-spacing:-0.719px;margin-right:0.719px;"><span>21508</span></div>
<div class="t" id="t64" style="top:366px;left:220.00px;letter-spacing:-0.286px;"><span>PI Failures</span></div>
<div class="t" id="t68" style="top:381px;right:385.70px;color:#000080;letter-spacing:-0.953px;margin-right:0.953px;"><span>0.20</span></div>
<div class="t" id="t69" style="top:399px;right:385.70px;color:#000080;letter-spacing:-0.859px;margin-right:0.859px;"><span>10</span></div>
<div class="t" id="t70" style="top:417px;right:385.70px;color:#000080;letter-spacing:-0.734px;margin-right:0.734px;"><span>2445</span></div>
<div class="t" id="t71" style="top:366px;left:401.20px;letter-spacing:0.097px;"><span>Jitter</span></div>
<div class="t" id="t74" style="top:381px;right:216.00px;color:#000080;letter-spacing:-1.083px;margin-right:1.083px;"><span>10.44</span></div>
<div class="t" id="t75" style="top:399px;right:216.00px;color:#000080;letter-spacing:-1.120px;margin-right:1.120px;"><span>13.1</span></div>
<div class="t" id="t78" style="top:422px;left:388.70px;letter-spacing:-0.472px;"><span>PO Failures:</span></div>
<div class="t" id="t79" style="top:422px;right:205.70px;color:#000080;letter-spacing:-0.188px;margin-right:0.188px;"><span>0</span></div>
<div class="t" id="t84" style="top:109px;left:567.40px;letter-spacing:-0.672px;"><span>ID:</span></div>
<div class="t" id="t86" style="top:139px;left:567.40px;letter-spacing:-0.381px;"><span>Label:</span></div>
<div class="t" id="t87" style="top:93px;left:616.40px;color:#000080;letter-spacing:-0.125px;"><span>DVD-R</span></div>
<div class="t" id="t88" style="top:109px;left:616.40px;color:#000080;letter-spacing:-0.486px;"><span>ProdiscS03</span></div>
<div class="t" id="t89" style="top:124px;left:616.40px;color:#000080;letter-spacing:-0.233px;"><span>28 July 2005</span></div>
<div class="t" id="t90" style="top:139px;left:616.40px;color:#000080;letter-spacing:-1.003px;"><span>CDS_TEST_B2</span></div>
<div class="t" id="t91" style="top:153px;left:568.90px;color:#0000f0;letter-spacing:-0.123px;"><span>Settings</span></div>
<div class="t" id="t95" style="top:173px;left:633.90px;letter-spacing:0.442px;"><span>4 X</span></div>
<div class="t" id="t96" style="top:195px;left:632.90px;letter-spacing:-0.422px;"><span>0000 MB</span></div>
<div class="t" id="t97" style="top:218px;left:632.90px;letter-spacing:-0.422px;"><span>4488 MB</span></div>
<div class="t" id="t98" style="top:241px;left:584.20px;letter-spacing:-0.373px;"><span>Quick Scan</span></div>
<div class="t" id="t99" style="top:260px;left:584.20px;letter-spacing:-0.438px;"><span>Show C1/PIE</span></div>
<div class="t" id="t100" style="top:275px;left:584.20px;letter-spacing:-0.370px;"><span>Show C2/PIF</span></div>
<div class="t" id="t101" style="top:290px;left:584.20px;letter-spacing:-0.086px;"><span>Show Jitter</span></div>
<div class="t" id="t102" style="top:305px;left:584.20px;letter-spacing:-0.613px;"><span>Show Read Speed</span></div>
<div class="t" id="t103" style="top:320px;left:584.20px;letter-spacing:-0.511px;"><span>Show Write Speed</span></div>
<div class="t" id="t105" style="top:348px;right:36.30px;color:#000080;letter-spacing:-0.859px;margin-right:0.859px;"><span>94</span></div>
<div class="t" id="t109" style="top:380px;right:46.80px;color:#000080;letter-spacing:-0.766px;margin-right:0.766px;"><span>100</span></div>
<div class="t" id="t111" style="top:400px;right:35.70px;color:#000080;letter-spacing:-0.339px;margin-right:0.339px;"><span>4487 MB</span></div>
<div class="t" id="t112" style="top:417px;right:35.70px;color:#000080;letter-spacing:-0.441px;margin-right:0.441px;"><span>4.16 X</span></div>
</div>
<svg width="0" height="0" style="position:absolute"><filter id="thr2" x="0" y="0" width="100%" height="100%" color-interpolation-filters="sRGB"><feComponentTransfer><feFuncA type="discrete" tableValues="0 0 0 0 0 1 1 1 1 1"/></feComponentTransfer></filter></svg>
<div id="ttl" style="position:absolute;left:0;top:0;width:743px;height:30px;filter:url(#thr2)">
<div class="t" id="t0" style="top:8px;left:6.50px;font-weight:bold;letter-spacing:1.656px;"><span>CD</span></div>
<div class="t" id="t1" style="top:8px;left:30.90px;font-weight:bold;letter-spacing:0.646px;"><span>Speed</span></div>
<div class="t" id="t2" style="top:8px;left:74.70px;font-weight:bold;"><span>:</span></div>
<div class="t" id="t3" style="top:8px;left:83.20px;font-weight:bold;letter-spacing:0.547px;"><span>Disc</span></div>
<div class="t" id="t4" style="top:8px;left:115.90px;font-weight:bold;letter-spacing:1.152px;"><span>Quality</span></div>
<div class="t" id="t5" style="top:8px;left:169.20px;font-weight:bold;letter-spacing:1.068px;"><span>Test</span></div>
<div class="t" id="t6" style="top:8px;left:203.00px;font-weight:bold;"><span><span style="display:inline-block;transform:scaleX(1.7);transform-origin:0 50%">-</span></span></div>
<div class="t" id="t7" style="top:8px;left:215.90px;font-weight:bold;letter-spacing:0.109px;"><span>BENQ</span></div>
<div class="t" id="t8" style="top:8px;left:271.90px;font-weight:bold;letter-spacing:0.628px;"><span>DVD</span></div>
<div class="t" id="t9" style="top:8px;left:304.20px;font-weight:bold;letter-spacing:-0.644px;"><span>DD</span></div>
<div class="t" id="t10" style="top:8px;left:326.90px;font-weight:bold;letter-spacing:0.662px;"><span>DW1640</span></div>
<div class="t" id="t11" style="top:8px;left:399.20px;font-weight:bold;letter-spacing:0.561px;"><span>BSJB</span></div>
</div>
</body></html>
